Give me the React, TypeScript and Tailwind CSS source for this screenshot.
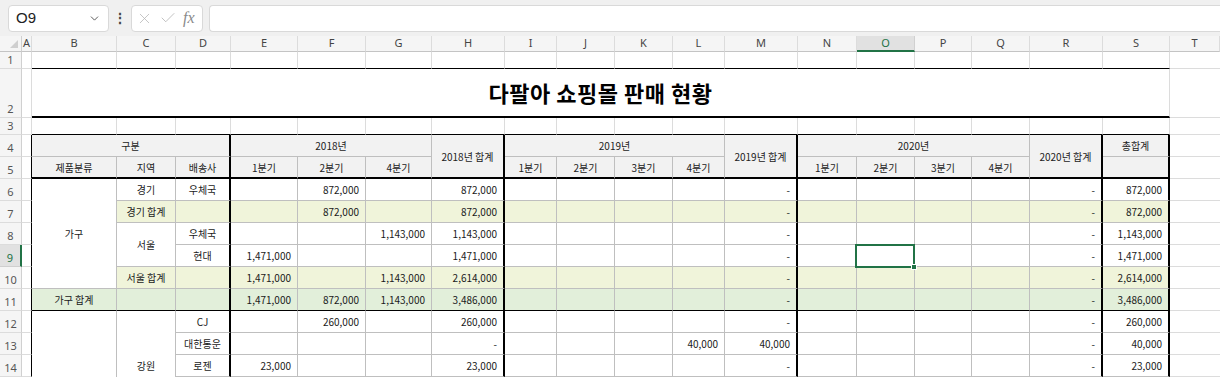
import clsx from "clsx";
import { ChevronDown, X, Check } from "lucide-react";

// Columns shown in the sheet, after the row header
const LETTERS = ["A", "B", "C", "D", "E", "F", "G", "H", "I", "J", "K", "L", "M", "N", "O", "P", "Q", "R", "S", "T"];
const TITLE_COLS = ["B", "C", "D", "E", "F", "G", "H", "I", "J", "K", "L", "M", "N", "O", "P", "Q", "R", "S"];
const VAL_COLS = ["E", "F", "G", "H", "I", "J", "K", "L", "M", "N", "O", "P", "Q", "R", "S"];
const THICK_COLS = ["D", "H", "M", "R", "S"];

// Border helpers (side specific so nothing conflicts)
const R_THIN = "border-r border-r-[#bfbfbf]";
const R_THICK = "border-r-2 border-r-black";
const B_THIN = "border-b border-b-[#bfbfbf]";
const B_BLACK = "border-b border-b-black";
const B_THICK = "border-b-2 border-b-black";
const GRID = "border-r border-b border-r-[#dcdcdc] border-b-[#dcdcdc]";

const YELLOW = "bg-[#f0f4da]";
const GREEN = "bg-[#e2efda]";

interface LeadCell {
  t: string;
  cls?: string;
}

interface SheetRow {
  n: number;
  lead: LeadCell[];
  v: string[];
  bg?: string;
  line?: boolean;
}

const blank = (): string[] => Array(15).fill("");

const dataRows: SheetRow[] = [
  {
    n: 6,
    lead: [{ t: "가구", cls: "row-span-5" }, { t: "경기" }, { t: "우체국" }],
    v: ["", "872,000", "", "872,000", "", "", "", "", "-", "", "", "", "", "-", "872,000"],
  },
  {
    n: 7,
    bg: YELLOW,
    lead: [{ t: "경기 합계", cls: YELLOW }, { t: "", cls: YELLOW }],
    v: ["", "872,000", "", "872,000", "", "", "", "", "-", "", "", "", "", "-", "872,000"],
  },
  {
    n: 8,
    lead: [{ t: "서울", cls: "row-span-2" }, { t: "우체국" }],
    v: ["", "", "1,143,000", "1,143,000", "", "", "", "", "-", "", "", "", "", "-", "1,143,000"],
  },
  {
    n: 9,
    lead: [{ t: "현대" }],
    v: ["1,471,000", "", "", "1,471,000", "", "", "", "", "-", "", "", "", "", "-", "1,471,000"],
  },
  {
    n: 10,
    bg: YELLOW,
    lead: [{ t: "서울 합계", cls: YELLOW }, { t: "", cls: YELLOW }],
    v: ["1,471,000", "", "1,143,000", "2,614,000", "", "", "", "", "-", "", "", "", "", "-", "2,614,000"],
  },
  {
    n: 11,
    bg: GREEN,
    line: true,
    lead: [{ t: "가구 합계", cls: GREEN }, { t: "", cls: GREEN }, { t: "", cls: GREEN }],
    v: ["1,471,000", "872,000", "1,143,000", "3,486,000", "", "", "", "", "-", "", "", "", "", "-", "3,486,000"],
  },
  {
    n: 12,
    lead: [{ t: "", cls: "row-span-5" }, { t: "강원", cls: "row-span-5" }, { t: "CJ" }],
    v: ["", "260,000", "", "260,000", "", "", "", "", "-", "", "", "", "", "-", "260,000"],
  },
  {
    n: 13,
    lead: [{ t: "대한통운" }],
    v: ["", "", "", "-", "", "", "", "40,000", "40,000", "", "", "", "", "-", "40,000"],
  },
  {
    n: 14,
    lead: [{ t: "로젠" }],
    v: ["23,000", "", "", "23,000", "", "", "", "", "-", "", "", "", "", "-", "23,000"],
  },
  // rows below the window, only there so the merged B/C cells keep going
  { n: 15, lead: [{ t: "" }], v: blank() },
  { n: 16, lead: [{ t: "" }], v: blank() },
];

const RowHead = ({ n, sel }: { n: number; sel?: boolean }) => (
  <div
    className={clsx(
      "flex items-end justify-center pb-[1px] text-[11px] leading-[14px] font-['Noto_Sans',sans-serif] border-b",
      sel
        ? "bg-[#e1e1e1] text-[#217346] border-r-2 border-r-[#217346] border-b-[#cfcfcf]"
        : "bg-[#f5f5f5] text-[#555] border-r border-r-[#d0d0d0] border-b-[#dcdcdc]"
    )}
  >
    {n <= 14 ? n : ""}
  </div>
);

const Head = ({ children, className }: { children?: React.ReactNode; className: string }) => (
  <div className={clsx("bg-[#f2f2f2] flex items-center justify-center text-[10px] text-[#222]", className)}>
    {children}
  </div>
);

const TableA = () => <div className="border-b border-b-[#dcdcdc] border-r border-r-black" />;
const SheetT = () => <div className="border-b border-b-[#dcdcdc]" />;

// Active cell outline (O9)
const Selection = () => (
  <span className="absolute -left-[2px] -top-[1px] -right-[1px] -bottom-[2px] z-10 border-2 border-[#217346]">
    <span className="absolute -right-[4px] -bottom-[4px] w-[6px] h-[6px] bg-[#217346] border border-white" />
  </span>
);

const Toolbar = () => (
  <div className="h-[36px] bg-[#f0f0f0] flex items-center pl-[8px] font-['Liberation_Sans',sans-serif]">
    <div className="w-[101px] h-[27px] bg-white rounded-[4px] border border-[#d9d9d9] flex items-center justify-between pl-[7px] pr-[7px]">
      <span className="text-[15px] text-[#222]">O9</span>
      <ChevronDown size={13} strokeWidth={1.6} className="text-[#444]" />
    </div>
    <div className="w-[22px] flex justify-center text-[14px] font-bold text-[#444]">⋮</div>
    <div className="w-[72px] h-[27px] bg-white rounded-[4px] border border-[#d9d9d9] flex items-center pl-[4px] gap-[6px]">
      <X size={17} strokeWidth={1.1} className="text-[#b5b5b5]" />
      <Check size={18} strokeWidth={1.1} className="text-[#b5b5b5]" />
      <span className="italic font-['Liberation_Serif',serif] text-[16px] text-[#8a8a8a]">fx</span>
    </div>
    <div className="flex-1 ml-[6px] h-[27px] bg-white rounded-l-[4px] border border-r-0 border-[#d9d9d9]" />
  </div>
);

export default function App() {
  return (
    <div className="w-full h-[377px] overflow-hidden bg-white font-['Noto_Sans_CJK_KR',sans-serif] text-[#1a1a1a]">
      <Toolbar />
      <div className="grid grid-cols-[22px_10px_85px_59px_55px_67px_68px_66px_73px_52px_58px_58px_52px_73px_59px_58px_57px_58px_73px_67px_1fr] grid-rows-[16px_17px_49px_17px_repeat(13,22px)]">
        {/* column letters */}
        <div className="relative bg-[#f5f5f5] border-r border-b border-r-[#d0d0d0] border-b-[#c4c4c4]">
          <span className="absolute right-[3px] bottom-[3px] w-0 h-0 border-l-[8px] border-l-transparent border-b-[8px] border-b-[#cfcfcf]" />
        </div>
        {LETTERS.map((l) =>
          l === "O" ? (
            <div
              key={l}
              className="bg-[#e1e1e1] border-r border-r-[#d0d0d0] border-b-2 border-b-[#217346] text-[#217346] flex items-center justify-center text-[11px] font-['Noto_Sans',sans-serif]"
            >
              {l}
            </div>
          ) : (
            <div
              key={l}
              className="bg-[#f5f5f5] border-r border-r-[#dcdcdc] border-b border-b-[#c4c4c4] text-[#444] flex items-center justify-center text-[11px] font-['Noto_Sans',sans-serif]"
            >
              {l}
            </div>
          )
        )}

        {/* row 1 */}
        <RowHead n={1} />
        <div className={GRID} />
        {TITLE_COLS.map((c) => (
          <div key={c} className="border-r border-r-[#dcdcdc] border-b border-b-black" />
        ))}
        <SheetT />

        {/* row 2: title */}
        <RowHead n={2} />
        <div className={GRID} />
        <div className="col-span-18 border-r border-r-[#dcdcdc] border-b-2 border-b-black flex items-center justify-center text-[22px] font-bold text-black tracking-[0.5px]">
          다팔아 쇼핑몰 판매 현황
        </div>
        <SheetT />

        {/* row 3 */}
        <RowHead n={3} />
        <div className={GRID} />
        {TITLE_COLS.map((c) => (
          <div key={c} className="border-r border-r-[#dcdcdc] border-b border-b-black" />
        ))}
        <SheetT />

        {/* row 4: header */}
        <RowHead n={4} />
        <TableA />
        <Head className={clsx("col-span-3", R_THICK, B_THIN)}>구분</Head>
        <Head className={clsx("col-span-3", R_THIN, B_THIN)}>2018년</Head>
        <Head className={clsx("row-span-2", R_THICK, B_THICK)}>2018년 합계</Head>
        <Head className={clsx("col-span-4", R_THIN, B_THIN)}>2019년</Head>
        <Head className={clsx("row-span-2", R_THICK, B_THICK)}>2019년 합계</Head>
        <Head className={clsx("col-span-4", R_THIN, B_THIN)}>2020년</Head>
        <Head className={clsx("row-span-2", R_THICK, B_THICK)}>2020년 합계</Head>
        <Head className={clsx(R_THICK, B_THIN)}>총합계</Head>
        <SheetT />

        {/* row 5: header */}
        <RowHead n={5} />
        <TableA />
        <Head className={clsx(R_THIN, B_THICK)}>제품분류</Head>
        <Head className={clsx(R_THIN, B_THICK)}>지역</Head>
        <Head className={clsx(R_THICK, B_THICK)}>배송사</Head>
        <Head className={clsx(R_THIN, B_THICK)}>1분기</Head>
        <Head className={clsx(R_THIN, B_THICK)}>2분기</Head>
        <Head className={clsx(R_THIN, B_THICK)}>4분기</Head>
        <Head className={clsx(R_THIN, B_THICK)}>1분기</Head>
        <Head className={clsx(R_THIN, B_THICK)}>2분기</Head>
        <Head className={clsx(R_THIN, B_THICK)}>3분기</Head>
        <Head className={clsx(R_THIN, B_THICK)}>4분기</Head>
        <Head className={clsx(R_THIN, B_THICK)}>1분기</Head>
        <Head className={clsx(R_THIN, B_THICK)}>2분기</Head>
        <Head className={clsx(R_THIN, B_THICK)}>3분기</Head>
        <Head className={clsx(R_THIN, B_THICK)}>4분기</Head>
        <Head className={clsx(R_THICK, B_THICK)} />
        <SheetT />

        {/* data rows */}
        {dataRows.map((row) => {
          const bottom = row.line ? B_BLACK : B_THIN;
          return [
            <RowHead key={`h${row.n}`} n={row.n} sel={row.n === 9} />,
            <TableA key={`a${row.n}`} />,
            ...row.lead.map((c, i) => (
              <div
                key={`l${row.n}-${i}`}
                className={clsx(
                  "flex items-center justify-center text-[10px]",
                  i === row.lead.length - 1 ? R_THICK : R_THIN,
                  bottom,
                  c.cls
                )}
              >
                {c.t}
              </div>
            )),
            ...row.v.map((v, i) => {
              const col = VAL_COLS[i];
              return (
                <div
                  key={`v${row.n}-${col}`}
                  className={clsx(
                    "relative flex items-center justify-end pr-[6px] text-[10px]",
                    THICK_COLS.includes(col) ? R_THICK : R_THIN,
                    bottom,
                    row.bg
                  )}
                >
                  {v}
                  {row.n === 9 && col === "O" && <Selection />}
                </div>
              );
            }),
            <SheetT key={`t${row.n}`} />,
          ];
        })}
      </div>
    </div>
  );
}
